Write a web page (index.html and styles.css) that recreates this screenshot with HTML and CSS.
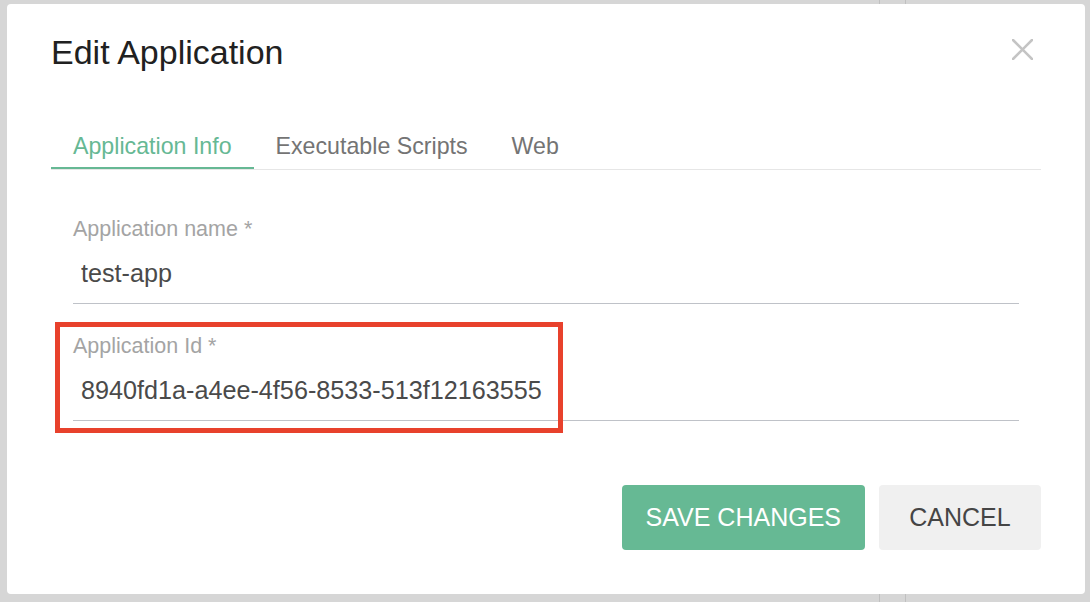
FILE: index.html
```html
<!DOCTYPE html>
<html lang="en">
<head>
<meta charset="utf-8">
<title>Edit Application</title>
<link rel="stylesheet" href="styles.css">
</head>
<body>
<div class="backdrop"><div class="backdrop-col"></div></div>

<div class="dialog" role="dialog" aria-labelledby="dlg-title">
  <div class="dialog-header">
    <h2 class="dialog-title" id="dlg-title">Edit Application</h2>
    <button class="close-btn" aria-label="Close">
      <svg width="21" height="21" viewBox="0 0 21 21"><path d="M1 1 L20 20 M20 1 L1 20" stroke="#c4c4c4" stroke-width="2.5" fill="none" stroke-linecap="round"/></svg>
    </button>
  </div>

  <div class="tabs">
    <div class="tab active">Application Info</div>
    <div class="tab">Executable Scripts</div>
    <div class="tab">Web</div>
  </div>

  <form class="form">
    <div class="field">
      <label class="field-label">Application name *</label>
      <input class="field-input" type="text" value="test-app" readonly>
    </div>
    <div class="field field-second">
      <label class="field-label">Application Id *</label>
      <input class="field-input" type="text" value="8940fd1a-a4ee-4f56-8533-513f12163555" readonly>
    </div>
  </form>

  <div class="actions">
    <button class="btn btn-primary">SAVE CHANGES</button>
    <button class="btn btn-secondary">CANCEL</button>
  </div>

  <div class="highlight"></div>
</div>
</body>
</html>
```

FILE: styles.css
```css
* { box-sizing: border-box; }

html, body {
  margin: 0;
  padding: 0;
  width: 1090px;
  height: 602px;
  overflow: hidden;
  background: #d6d6d6;
  font-family: "Liberation Sans", Arial, Helvetica, sans-serif;
}

.backdrop {
  height: 602px;
  padding-left: 879px;
}

.backdrop-col {
  width: 27px;
  height: 100%;
  border-left: 1px solid #c0c0c0;
  border-right: 1px solid #c0c0c0;
}

.dialog {
  position: fixed;
  left: 7px;
  top: 4px;
  width: 1078px;
  height: 590px;
  background: #ffffff;
  border-radius: 4px;
  padding: 28px 44px 44px 44px;
  display: flex;
  flex-direction: column;
}

.dialog-header {
  display: flex;
  justify-content: space-between;
  align-items: flex-start;
}

.dialog-title {
  margin: 0;
  font-size: 34px;
  line-height: 40px;
  font-weight: normal;
  color: #212121;
}

.close-btn {
  margin: 7px 8px 0 0;
  padding: 0;
  width: 21px;
  height: 21px;
  border: none;
  background: none;
  display: flex;
}

.tabs {
  margin-top: 59px;
  display: flex;
  border-bottom: 1px solid #e6e6e6;
}

.tab {
  padding: 0 22px 6px 22px;
  font-size: 23.2px;
  line-height: 30px;
  color: #747474;
  border-bottom: 2px solid transparent;
}

.tab.active {
  color: #66b894;
  border-bottom-color: #66b894;
}

.form {
  padding: 47px 22px 0 22px;
  display: flex;
  flex-direction: column;
}

.field {
  display: flex;
  flex-direction: column;
}

.field-second {
  margin-top: 30px;
}

.field-label {
  font-size: 21.5px;
  line-height: 24px;
  color: #a4a4a4;
}

.field-input {
  margin-top: 12px;
  height: 51px;
  padding: 0 8px 10px 8px;
  border: none;
  border-bottom: 1px solid #bfc2c8;
  outline: none;
  background: transparent;
  font-family: "Liberation Sans", Arial, Helvetica, sans-serif;
  font-size: 25.2px;
  line-height: 40px;
  color: #4a4a4a;
}

.actions {
  margin-top: auto;
  display: flex;
  justify-content: flex-end;
  gap: 14px;
}

.btn {
  height: 65px;
  padding: 0 24px;
  border: none;
  border-radius: 4px;
  font-family: "Liberation Sans", Arial, Helvetica, sans-serif;
  font-size: 25px;
  line-height: 65px;
}

.btn-primary {
  background: #66b994;
  color: #ffffff;
}

.btn-secondary {
  min-width: 162px;
  background: #f0f0f0;
  color: #454545;
}

.highlight {
  position: absolute;
  left: 48px;
  top: 318px;
  width: 508px;
  height: 111px;
  border: 5px solid #e8412c;
  pointer-events: none;
}
```
